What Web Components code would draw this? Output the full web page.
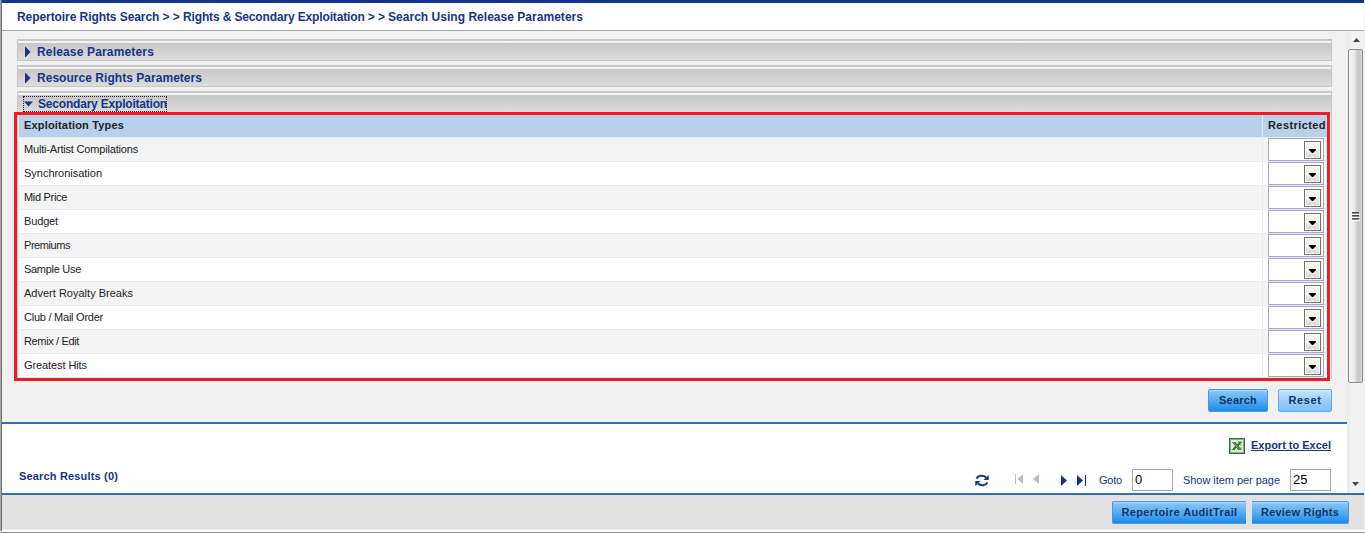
<!DOCTYPE html>
<html lang="en">
<head>
<meta charset="utf-8">
<title>Repertoire Rights Search</title>
<style>
html,body{margin:0;height:533px;overflow:hidden;background:#fff}
body{font-family:"Liberation Sans",Arial,sans-serif;font-size:11px}
</style>
</head>
<body>
<rights-app></rights-app>
<script>
const define = (name, html, init) => {
  const t = document.createElement('template');
  t.innerHTML = '<style>*{box-sizing:border-box}:host{box-sizing:border-box}</style>' + html;
  customElements.define(name, class extends HTMLElement {
    constructor() {
      super();
      this.attachShadow({mode: 'open'}).append(t.content.cloneNode(true));
    }
    connectedCallback() { if (init) init(this, this.shadowRoot); }
  });
};

// A single-line label whose tracking is adjusted to fill the width in "w".
define('ui-text', `<style>:host{display:inline-block;white-space:nowrap}span{display:inline-block;white-space:pre}</style><span><slot></slot></span>`, (el, root) => {
  const span = root.querySelector('span'), w = +el.getAttribute('w');
  if (!w) return;
  const n = el.textContent.length;
  span.style.letterSpacing = '0';
  span.style.letterSpacing = (w - span.getBoundingClientRect().width) / n + 'px';
  el.style.width = w + 'px';
});

define('page-header', `<style>
:host{display:flex;height:31px;border-top:3px solid #14358a;border-bottom:1px solid #a3a3a3;background:#fff;padding:7px 0 0 15px;color:#14358a;font:bold 12px/14px "Liberation Sans",Arial,sans-serif}
</style><slot></slot>`);

define('fold-panel', `<style>
:host{display:block;width:1315px;border:1px solid #c6c6c6;margin-bottom:4px}
.bar{height:20px;display:flex;align-items:center;padding:3px 0 0 6px;color:#14358a;font:bold 12px/14px "Liberation Sans",Arial,sans-serif;background:linear-gradient(#c9c9c9 0 1px,#f3f3f3 1px 3px,transparent 3px),linear-gradient(#c7c7c7 3px,#dcdcdc)}
.in{display:flex;align-items:center;height:15px}
svg{display:block;width:13px;height:10px;fill:#14358a;flex:none}
.down{display:none}
:host([open]) .bar{padding:4px 0 0 5px}
:host([open]) .in{outline:1px dotted #222;outline-offset:-1px;width:144px;height:16px;padding-left:1px}
:host([open]) .right{display:none}:host([open]) .down{display:block}
:host([open]) svg{width:14px;height:9px}
</style><div class="bar"><div class="in"><svg class="right" viewBox="0 0 13 10"><path d="M1 0h.7L6.500 5l-4.800 5H1z"/></svg><svg class="down" viewBox="0 0 14 9"><path d="M0 1.500h9L4.500 6.500z"/></svg><slot name="title"></slot></div></div><slot></slot>`);

define('drop-box', `<style>
:host{display:flex;justify-content:flex-end;width:56px;height:23px;border:1px solid #a5a5c6;background:#fff;padding:2px}
i{width:17px;height:18px;border:1px solid #707070;box-shadow:inset 0 0 0 1px #fff;background:linear-gradient(#f2f2f2 50%,#d4d4d4);display:grid;place-items:center}
svg{display:block;width:7px;height:4px;margin-top:2px}
</style><i><svg viewBox="0 0 7 4"><path d="M0 0h7v1L4 4H3L0 1z"/></svg></i>`);

define('exploit-row', `<style>
:host{display:grid;grid-template-columns:1244px 1fr;height:24px;border-bottom:1px solid #e7ebf0;background:#fff;color:#222;font-size:11px;line-height:13px}
:host([alt]){background:#f4f4f4}
:host([head]){height:23px;background:#b8d0ea;font-weight:bold}
.a{padding:5px 0 0 5px;border-right:1px solid #e3ebf4}.b{padding-left:5px}
:host([head]) .b{padding-top:4px}:host([head]) .a{padding-top:4px}
</style><div class="a"><slot></slot></div><div class="b"><slot name="value"><drop-box></drop-box></slot></div>`);

define('ui-button', `<style>
:host{display:flex;justify-content:center;height:23px;padding-top:4px;border:1px solid #4b97df;border-radius:2px;background:linear-gradient(#a4d2fa 0 1px,#82c2f6 2px,#56adf2 50%,#2993ee 88%,#2089e8);color:#12345f;font:bold 11px/13px "Liberation Sans",Arial,sans-serif}
:host([soft]){border-color:#5cabf4;background:linear-gradient(#d3e9fd 0 1px,#bddffc 2px,#9bcffa 50%,#7cbffa)}
:host([cut=right]){border-right:0;border-radius:2px 0 0 2px}
:host([cut=left]){border-left:0;border-radius:0 2px 2px 0}
</style><slot></slot>`);

define('number-box', `<style>:host{display:block;height:22px;border:1px solid #a5a5c6;background:#fff;color:#000;font-size:13px;line-height:20px;padding-left:2px}</style><slot></slot>`);

define('scroll-bar', `<style>
:host{display:flex;flex-direction:column;align-items:center;width:16px;background:linear-gradient(90deg,#e9e9e9,#f3f3f3 30%,#f1f1f1)}
svg{display:block}
.up{margin:7px 0 0 1px}
.thumb{margin-top:7px;width:15px;height:334px;border:1px solid #8d8d8d;border-radius:2px;background:linear-gradient(90deg,#f7f7f7,#ececec 40%,#cfcfd1 60%,#c7c7ca 80%,#dcdcdc);display:grid;place-items:center}
.down{margin-top:99px}
</style><svg class="up" width="7" height="4"><path d="M0 4L3.500 0 7 4z" fill="#444"/></svg><div class="thumb"><svg width="8" height="9"><path d="M0 .5h7M0 3.500h7M0 6.500h7" stroke="#4a4a4a"/><path d="M0 1.500h7M0 4.500h7M0 7.500h7" stroke="#8d8d8d"/><path d="M0 2.500h8M0 5.500h8M0 8.500h8" stroke="#fff"/></svg></div><svg class="down" width="7" height="4"><path d="M0 0h7L3.500 4z" fill="#444"/></svg>`);

define('excel-icon', `<style>:host{display:block;width:16px;height:16px}svg{display:block}</style>
<svg width="16" height="16" viewBox="0 0 16 16"><path fill="#37733a" d="M0 0h16v16H0z"/><path fill="#7fae78" d="M1 1h14v14H1z"/><path fill="#e6efe1" d="M2 2h12v12H2z"/><path fill="#b5cdae" d="M9 3h4v2H9zm2 3h2v2h-2zm0 3h2v3h-2z"/><path fill="#2f7434" d="M3 4h3.500l1.700 2.200L10 4h3l-3.300 4 3 4H9L7.300 9.800 5.500 12H2.700L6 8z"/><path d="M4.500 4.700l6 6.800" stroke="#8fbc86"/></svg>`);

define('refresh-icon', `<style>:host{display:block;width:14px;height:13px}svg{display:block}</style>
<svg width="14" height="13" viewBox="0 0 14 13" fill="none" stroke="#14358a" stroke-width="2"><path d="M1.500 4.700C3 1.500 8 .6 11 3.500"/><path d="M12.500 8.300C11 11.500 6 12.400 3 9.500"/><path fill="#14358a" stroke="none" d="M13.700 1v5H8.500zM.3 12V7h5.200z"/></svg>`);

define('pager-icon', `<style>:host{display:block;height:11px;color:#14358a}:host([off]){color:#b3bdd8}svg{display:block;fill:currentColor}</style><svg height="11"><path/></svg>`, (el, root) => {
  const shapes = {
    first: [8, 'M0 0h1v10H0zM8 0v10L2.500 5z'],
    prev: [6, 'M6 0v10L0 5z'],
    next: [6, 'M0 0l6 5.500L0 11z'],
    last: [9, 'M0 0l6 5.500L0 11zM8 0h1v11H8z']
  };
  const [w, d] = shapes[el.getAttribute('kind')];
  root.querySelector('svg').setAttribute('width', w);
  root.querySelector('path').setAttribute('d', d);
});

define('results-bar', `<style>
:host{display:block;height:69px;color:#14358a;font-size:11px;line-height:13px;background:#fff}
.export{display:flex;justify-content:flex-end;padding:14px 16px 0 0;height:45px}
.export ui-text{margin:1px 0 0 6px;font-weight:bold;text-decoration:underline;height:14px}
.line{display:flex;padding-left:17px;height:24px}
b{display:block;width:956px;padding-top:1px}
refresh-icon{margin:5px 26px 0 0}
pager-icon{margin-top:5px}
pager-icon[kind=prev]{margin-left:10px}
pager-icon[kind=next]{margin:6px 0 0 22px}
pager-icon[kind=last]{margin:6px 13px 0 10px}
.line>ui-text{margin-top:5px}
</style>
<div class="export"><excel-icon></excel-icon><ui-text w="80"><u>Export to Excel</u></ui-text></div>
<div class="line"><b><ui-text w="99">Search Results (0)</ui-text></b><refresh-icon></refresh-icon>
<pager-icon kind="first" off></pager-icon><pager-icon kind="prev" off></pager-icon><pager-icon kind="next"></pager-icon><pager-icon kind="last"></pager-icon>
<ui-text w="23">Goto</ui-text><number-box style="width:41px;margin-left:10px">0</number-box>
<ui-text w="97" style="margin-left:10px">Show item per page</ui-text><number-box style="width:41px;margin-left:10px">25</number-box></div>`);

define('search-form', `<style>
:host{display:block;position:relative;height:393px;background:#f1f1f1;border-bottom:2px solid #2f6fba;padding:8px 0 0 15px}
.mark{position:absolute;left:12px;top:81px;width:1316px;height:269px;border:3px solid #ee1c24}
#rows{padding:0 3px 0 1px;background:linear-gradient(#dcdcdc 3px,#f1f1f1 3px)}
.actions{display:flex;justify-content:flex-end;gap:10px;padding-right:15px;margin-top:10px}
</style>
<fold-panel><ui-text slot="title" w="117">Release Parameters</ui-text></fold-panel>
<fold-panel><ui-text slot="title" w="165">Resource Rights Parameters</ui-text></fold-panel>
<fold-panel open><ui-text slot="title" w="129">Secondary Exploitation</ui-text><div id="rows"></div></fold-panel>
<div class="actions"><ui-button style="width:60px"><ui-text w="38">Search</ui-text></ui-button><ui-button soft style="width:54px"><ui-text w="33">Reset</ui-text></ui-button></div>
<div class="mark"></div>`, (el, root) => {
  const rows = [['Multi-Artist Compilations', 114], ['Synchronisation', 78], ['Mid Price', 43], ['Budget', 34], ['Premiums', 46], ['Sample Use', 57], ['Advert Royalty Breaks', 109], ['Club / Mail Order', 79], ['Remix / Edit', 55], ['Greatest Hits', 63]];
  root.querySelector('#rows').innerHTML =
    '<div style="height:3px"></div><exploit-row head><ui-text w="100">Exploitation Types</ui-text><ui-text slot="value" w="58">Restricted</ui-text></exploit-row>' +
    rows.map(([t, w], i) => `<exploit-row ${i % 2 ? '' : 'alt'}><ui-text w="${w}">${t}</ui-text></exploit-row>`).join('');
});

define('page-footer', `<style>
:host{display:flex;justify-content:flex-end;align-items:flex-start;gap:6px;height:37px;border-top:2px solid #2f6fba;border-bottom:1px solid #eee;background:#e2e2e2;padding:6px 15px 0 0}
</style><ui-button cut="right" style="width:134px"><ui-text w="116">Repertoire AuditTrail</ui-text></ui-button><ui-button cut="left" style="width:97px"><ui-text w="78">Review Rights</ui-text></ui-button>`);

define('rights-app', `<style>
:host{display:block;width:1365px;height:533px;border-bottom:1px solid #8f8f8f;background:#fff}
.frame{height:531px;border-left:1px solid #a6a6a6;box-shadow:inset 1px 0 #707070;padding-left:1px;border-right:1px solid #f1f1f1}
.main{display:grid;grid-template-columns:1345px 17px;height:462px}
.main>div{min-width:0}
scroll-bar{width:17px}
</style><div class="frame"><page-header><ui-text w="166">Repertoire Rights Search &gt; &gt; </ui-text><ui-text w="205">Rights &amp; Secondary Exploitation &gt; &gt; </ui-text><ui-text w="195">Search Using Release Parameters</ui-text></page-header>
<div class="main"><div><search-form></search-form><results-bar></results-bar></div><scroll-bar></scroll-bar></div><page-footer></page-footer></div>`);
</script>
</body>
</html>
